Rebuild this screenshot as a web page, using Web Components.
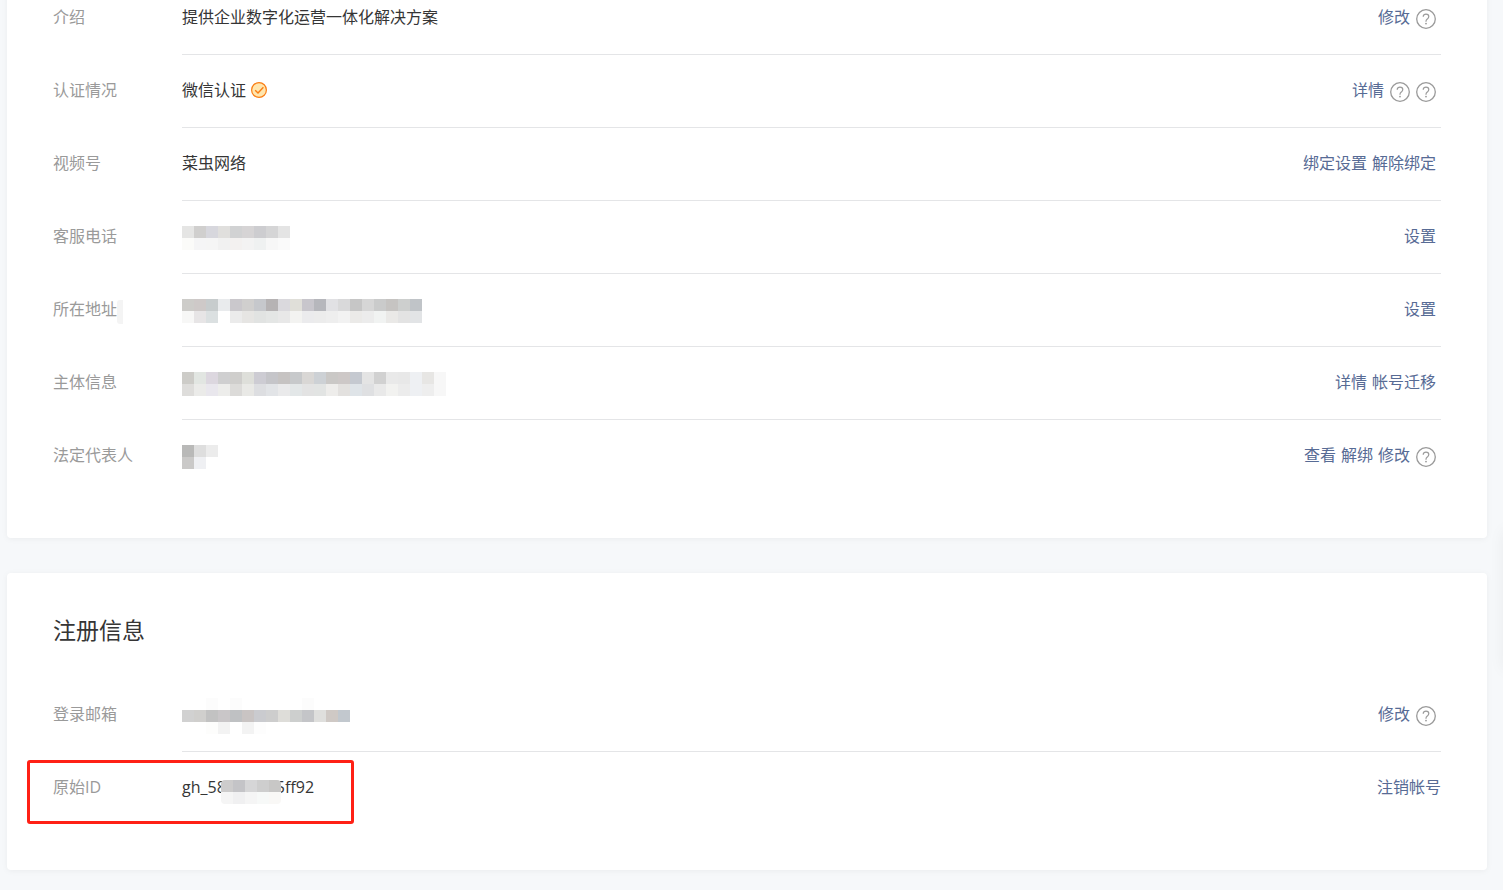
<!DOCTYPE html>
<html lang="zh-CN">
<head>
<meta charset="utf-8">
<title>帐号详情</title>
<style>
  body {
    margin: 0;
    overflow: hidden;
    background: #f6f8fa;
    color: #353535;
    font: 16px/24px "Open Sans", "Noto Sans CJK SC", sans-serif;
  }
</style>
</head>
<body>
<account-page>
  <setting-card>
    <setting-row label="介绍">
      提供企业数字化运营一体化解决方案
      <action-link slot="actions">修改</action-link>
      <help-icon slot="actions"></help-icon>
    </setting-row>
    <setting-row label="认证情况">
      微信认证<verified-badge></verified-badge>
      <action-link slot="actions">详情</action-link>
      <help-icon slot="actions"></help-icon>
      <help-icon slot="actions"></help-icon>
    </setting-row>
    <setting-row label="视频号">
      菜虫网络
      <action-link slot="actions">绑定设置</action-link>
      <action-link slot="actions">解除绑定</action-link>
    </setting-row>
    <setting-row label="客服电话">
      <pixel-mosaic colors="e5e5e4 d0cfce d7d7dd e0dfdd d1d2d3 d6d4d5 cdcdd0 d5d5d6 e4e4e4 / fbfbf9 f5f5f6 f5f5f5 f1f1f1 f3f1f0 f3f3f3 eff1f1 f7f7f7 fafafa"></pixel-mosaic>
      <action-link slot="actions">设置</action-link>
    </setting-row>
    <setting-row label="所在地址" smudge>
      <pixel-mosaic colors="cdccc9 cec9c8 c7cccd e9ebed cac8cc d0cfce c6c8cc b6b3b4 dad9dd e0dfd9 c8c6cc b6b7bc e1e1e4 d9d9da c6c6c6 d6d6d6 cacbcb c6c4c2 cdcfce c0c4c8 / f7f7f6 e7e5e6 dbe0e1 fff ebebeb e6e5e3 e1e3e2 e4e6e5 e8e8e8 f3f3f1 ebebed ececec eeeeee f2f2f2 ebeae8 ececec f1f3f2 eae9e7 e3e3e3 e2e4e6"></pixel-mosaic>
      <action-link slot="actions">设置</action-link>
    </setting-row>
    <setting-row label="主体信息">
      <pixel-mosaic colors="cdccc8 e2e6e2 dcd7df cfcfd0 cfcecc dedfda cdccd3 c5c5c9 c6c3c2 c7c9cb d9d7d5 cdd1d5 cac8c6 cdc8c7 c5c9d0 e4e4e4 d1d1d1 e9e9e9 e8e8e8 eef0f3 e7e6e4 f7f7f7 / dedddb ebebe9 e9e7ed ededeb dcdbd9 e9e9e6 dddee1 e2e4e7 eaeaeb e3e7e8 e3e3e3 e2e4e3 eeedeb e3e1df dfe4e8 dfe0e2 e9e9e9 f2f2f0 ececec eef0f3 eeeeee f7f7f7"></pixel-mosaic>
      <action-link slot="actions">详情</action-link>
      <action-link slot="actions">帐号迁移</action-link>
    </setting-row>
    <setting-row label="法定代表人" last>
      <pixel-mosaic colors="b9b9b8 dedede ececec / cac9c8 eff0f3 fff"></pixel-mosaic>
      <action-link slot="actions">查看</action-link>
      <action-link slot="actions">解绑</action-link>
      <action-link slot="actions">修改</action-link>
      <help-icon slot="actions"></help-icon>
    </setting-row>
  </setting-card>

  <setting-card heading="注册信息">
    <setting-row label="登录邮箱">
      <pixel-mosaic colors="fff fff fcfcfc fff fcfcfc fff fff fff fff fff fcfcfc fff fff fff / d1d1d1 d0cfcd c2c2c2 c9c6c8 bfc1c3 c9c4c3 cacbcf cdcdcd deddd9 cdcfce c4c5c8 dfdfdd cfc9c5 c2c8ce / fff fff fdfdfc f3f3f3 fff f3f3f3 fdfdfd fff fff fff fff fff fff fff"></pixel-mosaic>
      <action-link slot="actions">修改</action-link>
      <help-icon slot="actions"></help-icon>
    </setting-row>
    <setting-row label="原始ID" last marked>
      gh_58<pixel-mosaic cover colors="cdcccc c4c4c7 d6d6d7 cecece c8c7c6 / f5f5f5 f0f0f1 f5f5f5 f7f9f8 f9f8f6"></pixel-mosaic>5ff92
      <action-link slot="actions" flush>注销帐号</action-link>
    </setting-row>
  </setting-card>
</account-page>

<script>
class AccountPage extends HTMLElement {
  connectedCallback() {
    this.attachShadow({ mode: 'open' });
    this.shadowRoot.innerHTML = `
      <style>
        :host { display: block; }
        /* the page is scrolled, so the first row starts above the window */
        main {
          display: flex;
          flex-direction: column;
          gap: 35px;
          margin: -18px 16px 20px 7px;
        }
        /* side toolbar tucked away past the right edge, only its shadow shows */
        .dock {
          position: fixed;
          top: 530px;
          left: 100%;
          width: 40px;
          height: 140px;
          border-radius: 4px;
          box-shadow: 0 0 16px rgba(0, 0, 0, .05);
        }
      </style>
      <main><slot></slot></main>
      <div class="dock"></div>
    `;
  }
}

class SettingCard extends HTMLElement {
  connectedCallback() {
    const heading = this.getAttribute('heading');
    this.attachShadow({ mode: 'open' });
    this.shadowRoot.innerHTML = `
      <style>
        :host { display: block; }
        section {
          padding: 0 46px 46px;
          background: #fff;
          border-radius: 4px;
          box-shadow: 0 1px 6px rgba(0, 0, 0, .05);
        }
        h2 {
          margin: 0;
          padding: 39px 0 31px;
          font-size: 23px;
          font-weight: 400;
          line-height: 36px;
        }
      </style>
      <section>
        ${heading ? `<h2>${heading}</h2>` : ''}
        <slot></slot>
      </section>
    `;
  }
}

class SettingRow extends HTMLElement {
  connectedCallback() {
    this.attachShadow({ mode: 'open' });
    this.shadowRoot.innerHTML = `
      <style>
        :host {
          display: flex;
          position: relative;
        }
        .label {
          flex: 0 0 129px;
          padding: 23px 0 25px;
          color: #9a9a9a;
        }
        .body {
          flex: 1;
          display: flex;
          align-items: center;
          justify-content: space-between;
          height: 70px;
          padding-bottom: 2px;
          border-bottom: 1px solid #e4e5e7;
        }
        :host([last]) .body { border-bottom: 0; }
        .value {
          display: flex;
          align-items: center;
        }
        .actions {
          display: flex;
          align-items: center;
          gap: 5px;
        }
        .smudge {
          position: absolute;
          top: 26px;
          left: 64px;
          width: 6px;
          height: 24px;
          background: #f4f4f4;
          border-radius: 3px 0 0 3px;
        }
        .mark {
          position: absolute;
          top: 8px;
          left: -26px;
          box-sizing: border-box;
          width: 327px;
          height: 64px;
          border: 3px solid #ff2015;
          border-radius: 3px;
        }
      </style>
      <div class="label">${this.getAttribute('label')}</div>
      <div class="body">
        <div class="value"><slot></slot></div>
        <div class="actions"><slot name="actions"></slot></div>
      </div>
      ${this.hasAttribute('smudge') ? '<span class="smudge"></span>' : ''}
      ${this.hasAttribute('marked') ? '<span class="mark"></span>' : ''}
    `;
  }
}

class ActionLink extends HTMLElement {
  connectedCallback() {
    this.attachShadow({ mode: 'open' });
    this.shadowRoot.innerHTML = `
      <style>
        :host { display: block; }
        :host(:last-child:not([flush])) { margin-right: 5px; }
        a {
          color: #576b95;
          text-decoration: none;
        }
      </style>
      <a href="#"><slot></slot></a>
    `;
  }
}

class HelpIcon extends HTMLElement {
  connectedCallback() {
    this.attachShadow({ mode: 'open' });
    this.shadowRoot.innerHTML = `
      <style>
        :host { display: block; }
        :host(:last-child) { margin-right: 5px; }
        button {
          display: block;
          padding: 3px 0 0;
          border: 0;
          background: none;
          cursor: pointer;
        }
        svg { display: block; }
      </style>
      <button type="button" aria-label="帮助">
        <svg width="21" height="20" viewBox="0 0 21 20" fill="none" stroke="#9a9a9a">
          <circle cx="11" cy="10" r="9.3" stroke-width="1.3"/>
          <path d="M8.2 7.8c0-1.700 1.200-2.700 2.800-2.700s2.800 1 2.800 2.500c0 1.200-.7 1.800-1.500 2.500-.8.6-1.300 1.100-1.300 2.200v.4" stroke-width="1.200"/>
          <circle cx="11" cy="14.600" r=".9" fill="#9a9a9a" stroke="none"/>
        </svg>
      </button>
    `;
  }
}

class VerifiedBadge extends HTMLElement {
  connectedCallback() {
    this.attachShadow({ mode: 'open' });
    this.shadowRoot.innerHTML = `
      <style>
        :host {
          display: block;
          margin-left: 5px;
        }
        svg { display: block; }
      </style>
      <svg width="16" height="16" viewBox="0 0 16 16" fill="none" stroke="#fa7d14">
        <circle cx="8" cy="8" r="7.400" fill="#ffe6ae" stroke-width="1.200"/>
        <path d="M4.200 8.200l2.800 2.700 5.400-5.700" stroke-width="1.400"/>
      </svg>
    `;
  }
}

// blocks that hide private values: rows are split by "/", cells by spaces
class PixelMosaic extends HTMLElement {
  connectedCallback() {
    const rows = this.getAttribute('colors').split('/').map(row => row.trim().split(' '));
    this.attachShadow({ mode: 'open' });
    this.shadowRoot.innerHTML = `
      <style>
        :host {
          display: grid;
          grid-template-columns: repeat(${rows[0].length}, 12px);
          grid-auto-rows: 12px;
          margin-top: 4px;
        }
        :host([cover]) {
          position: relative;
          margin: 10px -5px 0;
          border-radius: 4px;
          overflow: hidden;
        }
      </style>
      ${rows.flat().map(color => `<i style="background:#${color}"></i>`).join('')}
    `;
  }
}

customElements.define('account-page', AccountPage);
customElements.define('setting-card', SettingCard);
customElements.define('setting-row', SettingRow);
customElements.define('action-link', ActionLink);
customElements.define('help-icon', HelpIcon);
customElements.define('verified-badge', VerifiedBadge);
customElements.define('pixel-mosaic', PixelMosaic);
</script>
</body>
</html>
